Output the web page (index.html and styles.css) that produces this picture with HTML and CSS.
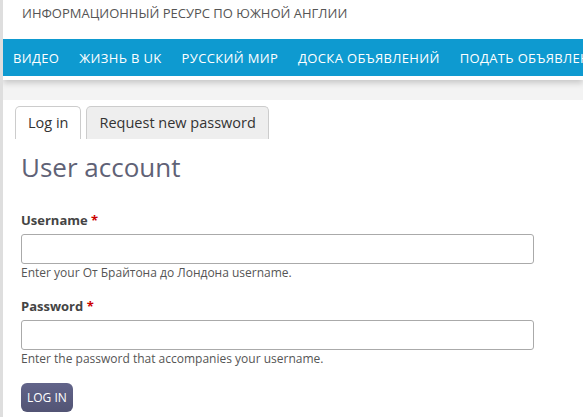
FILE: index.html
```html
<!DOCTYPE html>
<html lang="ru">
<head>
<meta charset="utf-8">
<title>User account</title>
<link rel="stylesheet" href="styles.css">
</head>
<body>
<div class="page">
  <header class="site-header">
    <div class="slogan">Информационный ресурс по Южной Англии</div>
    <nav class="main-nav">
      <a href="#">Видео</a>
      <a href="#">Жизнь в UK</a>
      <a href="#">Русский мир</a>
      <a href="#">Доска объявлений</a>
      <a href="#">Подать объявление</a>
    </nav>
  </header>
  <main class="content">
    <ul class="tabs">
      <li class="tab active"><a href="#">Log in</a></li>
      <li class="tab"><a href="#">Request new password</a></li>
    </ul>
    <h1 class="title">User account</h1>
    <form class="login-form">
      <div class="field">
        <label class="label">Username <span class="req">*</span></label>
        <input class="input" type="text">
        <div class="desc">Enter your От Брайтона до Лондона username.</div>
      </div>
      <div class="field">
        <label class="label">Password <span class="req">*</span></label>
        <input class="input" type="password">
        <div class="desc">Enter the password that accompanies your username.</div>
      </div>
      <button class="btn" type="button">Log in</button>
    </form>
  </main>
</div>
</body>
</html>
```
FILE: styles.css
```css
html, body {
  margin: 0;
  padding: 0;
}
body {
  background: #dedede;
  font-family: "Open Sans", "Liberation Sans", Arial, sans-serif;
  overflow: hidden;
  height: 417px;
}
.page {
  margin-left: 3px;
  background: #f3f3f3;
  height: 417px;
  overflow: hidden;
}
.site-header {
  background: #fff;
  box-shadow: 0 3px 6px rgba(0,0,0,0.18);
  padding-bottom: 4px;
}
.slogan {
  height: 39px;
  box-sizing: border-box;
  padding: 4px 0 0 19px;
  font-size: 13px;
  line-height: 18px;
  color: #555;
  text-transform: uppercase;
}
.main-nav {
  background: #0e9ad0;
  height: 37px;
  display: flex;
  align-items: center;
  gap: 20px;
  padding-left: 10px;
  white-space: nowrap;
  overflow: hidden;
}
.main-nav a {
  color: #fff;
  text-decoration: none;
  text-transform: uppercase;
  font-size: 13px;
  letter-spacing: 0.35px;
  line-height: 18px;
  flex-shrink: 0;
}
.content {
  background: #fff;
  margin-top: 20px;
  padding: 6px 18px 20px;
  min-height: 320px;
}
.tabs {
  list-style: none;
  margin: 0;
  padding: 0;
  display: flex;
  gap: 5px;
  margin-left: -6px;
}
.tab a {
  display: block;
  height: 33px;
  box-sizing: border-box;
  padding: 6px 12px 0;
  border: 1px solid #ccc;
  border-bottom: none;
  border-radius: 5px 5px 0 0;
  background: #eee;
  color: #333;
  text-decoration: none;
  font-size: 14.5px;
  line-height: 20px;
}
.tab.active a {
  background: #fff;
}
.title {
  margin: 12px 0 0;
  font-size: 26px;
  font-weight: 400;
  line-height: 32px;
  color: #5f6276;
}
.login-form {
  margin-top: 28px;
}
.field {
  margin-bottom: 16px;
}
.label {
  display: block;
  font-size: 13px;
  font-weight: 700;
  color: #444;
  line-height: 18px;
  margin-bottom: 5px;
}
.req {
  color: #c00;
}
.input {
  display: block;
  width: 513px;
  height: 30px;
  box-sizing: border-box;
  border: 1px solid #aaa;
  border-radius: 3px;
  background: #fff;
  margin: 0;
}
.desc {
  font-size: 12px;
  color: #555;
  line-height: 16px;
  margin-top: 1px;
}
.btn {
  display: block;
  height: 29px;
  padding: 0 6px;
  border: none;
  border-radius: 6px;
  background: linear-gradient(#62648a, #525474);
  color: #fff;
  font-family: inherit;
  font-size: 12px;
  text-transform: uppercase;
  margin-top: 14px;
}
```
